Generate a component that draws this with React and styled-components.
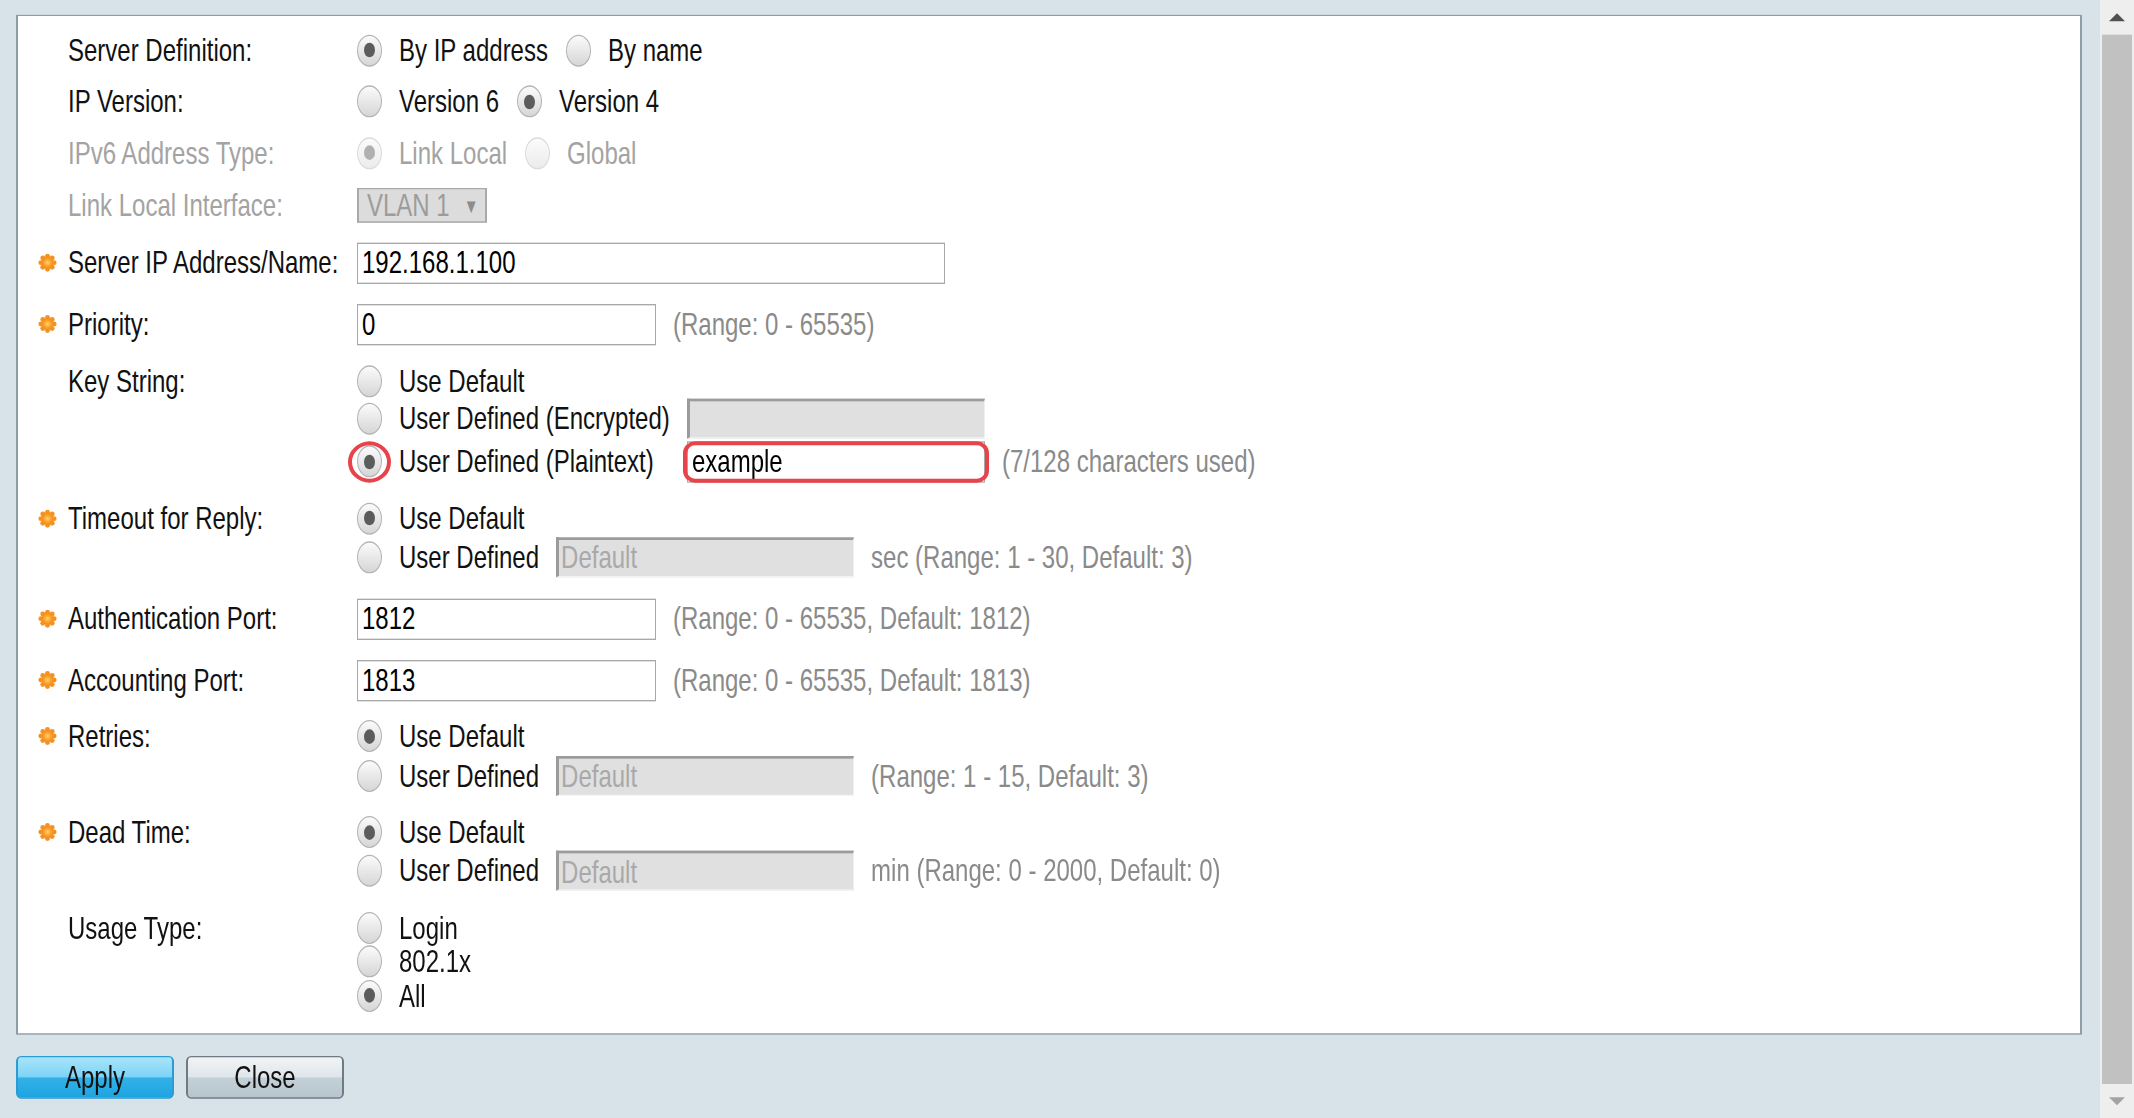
import styled, { createGlobalStyle, css } from "styled-components"

// The device UI is rendered at its natural size and stretched vertically
// like the captured page (text and radios look taller than wide there).
const GlobalStyle = createGlobalStyle`
  html, body {
    margin: 0;
    padding: 0;
    background: #d8e2e9;
  }
  * { box-sizing: border-box; }
  body, input, button {
    font-family: "Liberation Sans", Arial, sans-serif;
    font-size: 24px;
  }
`

const Page = styled.div`
  width: 100vw;
  height: 100vh;
  overflow: hidden;
`

const Viewport = styled.div`
  display: flex;
  width: 100%;
  height: 75%;
  transform: scaleY(1.33333);
  transform-origin: 0 0;
`

const Main = styled.div`
  flex: 1;
  display: flex;
  flex-direction: column;
  padding: 11px 18px 0 16px;
`

const Panel = styled.div`
  background: #fff;
  border: solid #8d9ea9;
  border-width: 1.5px 2px;
  padding: 13.5px 0 16.5px 20px;
  display: flex;
  flex-direction: column;
  gap: 14.6px;
`

const Row = styled.div`
  display: flex;
  align-items: flex-start;
`

const StarSlot = styled.div`
  width: 30px;
  height: ${p => p.$lh || 24}px;
  display: flex;
  align-items: center;
`

const Label = styled.div`
  width: 289px;
  line-height: ${p => p.$lh || 24}px;
  color: ${p => (p.$disabled ? "#a3a3a3" : "#111")};
  white-space: nowrap;
`

const Options = styled.div`
  display: flex;
  flex-direction: column;
  gap: 1.5px;
`

const Line = styled.div`
  display: flex;
  align-items: center;
  gap: 17px;
  min-height: ${p => p.$h || 24}px;
`

const Choice = styled.label`
  display: flex;
  align-items: center;
  gap: 17px;
  width: ${p => (p.$w ? `${p.$w}px` : "auto")};
  line-height: 24px;
  color: ${p => (p.$disabled ? "#a3a3a3" : "#111")};
  white-space: nowrap;
  & + & {
    margin-left: 1px;
  }
`

const Radio = styled.span`
  position: relative;
  flex: none;
  width: 25px;
  height: 24px;
  border-radius: 50%;
  border: 1px solid ${p => (p.$disabled ? "#dadada" : "#b4b4b4")};
  background: ${p =>
    p.$disabled
      ? "linear-gradient(#fbfbfb, #ececec)"
      : "linear-gradient(#fbfbfb, #d6d6d6)"};
  ${p =>
    p.$checked &&
    css`
      &::before {
        content: "";
        position: absolute;
        left: 50%;
        top: 50%;
        width: 11px;
        height: 11px;
        margin: -5.5px 0 0 -5.5px;
        border-radius: 50%;
        background: ${p.$disabled ? "#b0b0b0" : "#5c5c5c"};
      }
    `}
  ${p =>
    p.$ring &&
    css`
      &::after {
        content: "";
        position: absolute;
        inset: -4.5px -10px;
        border: solid #e8424a;
        border-width: 3px 4px;
        border-radius: 50%;
      }
    `}
`

const TextInput = styled.input`
  width: ${p => p.$w || 299}px;
  height: 31px;
  border: 1px solid #a8a8a8;
  padding: 0 4px;
  color: #000;
  background: #fff;
  outline: none;
`

const DisabledInput = styled.input`
  width: 298px;
  height: 30px;
  padding: 0 2px;
  background: #e0e0e0;
  border-style: solid;
  border-width: 2px 1px 1px 3px;
  border-color: #9b9b9b #f0f0f0 #f3f3f3 #9b9b9b;
  outline: none;
  &::placeholder {
    color: #a9a9a9;
  }
`

const Highlight = styled.div`
  position: relative;
  &::after {
    content: "";
    position: absolute;
    inset: 0 -4px;
    border: solid #e8424a;
    border-width: 3px 4px;
    border-radius: 12px / 9px;
    pointer-events: none;
  }
`

const Select = styled.div`
  width: 130px;
  height: 25.5px;
  display: flex;
  align-items: center;
  gap: 14px;
  padding-left: 8px;
  background: #dcdcdc;
  border: solid #a9a9a9;
  border-width: 1.5px 2px;
  color: #9c9c9c;
`

const Caret = styled.span`
  font-size: 15px;
  color: #8c8c8c;
`

const Hint = styled.span`
  color: #8a8a8a;
  white-space: nowrap;
`

const Footer = styled.div`
  display: flex;
  gap: 12px;
  margin-top: 16px;
`

const Button = styled.button`
  width: 158px;
  height: 31.5px;
  padding: 0;
  border-radius: 5px / 4px;
  color: #111;
  cursor: pointer;
  border-style: solid;
  border-width: 1.5px 2px;
  ${p =>
    p.$primary
      ? css`
          border-color: #2a9bd3;
          background: linear-gradient(#a8e4fb 0%, #7ed4f6 48%, #33b1e8 52%, #1ea4e0 100%);
        `
      : css`
          border-color: #6f7a83;
          background: linear-gradient(#f1f4f6 0%, #dfe6ea 48%, #c4d0d8 52%, #b7c5ce 100%);
        `}
`

const Scrollbar = styled.div`
  width: 34px;
  flex: none;
  display: flex;
  flex-direction: column;
  background: #eeeeee;
`

const ArrowBox = styled.div`
  height: 26px;
  display: flex;
  align-items: center;
  justify-content: center;
`

const Arrow = styled.span`
  width: 0;
  height: 0;
  border-left: 8px solid transparent;
  border-right: 8px solid transparent;
  ${p =>
    p.$down
      ? css`border-top: 6px solid #a3a3a3;`
      : css`border-bottom: 6px solid #505050;`}
`

const Thumb = styled.div`
  flex: 1;
  margin: 0 2px;
  background: #c1c1c1;
`

const Star = () => (
  <svg width="19" height="14" viewBox="0 0 20 20" preserveAspectRatio="none">
    <defs>
      <radialGradient id="sg" cx="50%" cy="50%" r="50%">
        <stop offset="0%" stopColor="#ffd36a" />
        <stop offset="60%" stopColor="#f9a12c" />
        <stop offset="100%" stopColor="#f28a1a" />
      </radialGradient>
    </defs>
    {[0, 45, 90, 135, 180, 225, 270, 315].map(a => (
      <circle
        key={a}
        cx={10 + 7 * Math.cos((a * Math.PI) / 180)}
        cy={10 + 7 * Math.sin((a * Math.PI) / 180)}
        r="2.6"
        fill="#f59222"
      />
    ))}
    <circle cx="10" cy="10" r="6.4" fill="url(#sg)" />
  </svg>
)

const Field = ({ label, required, lh, disabled, children }) => (
  <Row>
    <StarSlot $lh={lh}>{required && <Star />}</StarSlot>
    <Label $lh={lh} $disabled={disabled}>{label}</Label>
    <Options>{children}</Options>
  </Row>
)

const Opt = ({ checked, disabled, ring, w, children }) => (
  <Choice $disabled={disabled} $w={w}>
    <Radio $checked={checked} $disabled={disabled} $ring={ring} />
    {children}
  </Choice>
)

const DefaultOrUser = ({ hint }) => (
  <>
    <Line>
      <Opt checked>Use Default</Opt>
    </Line>
    <Line $h={31.5}>
      <Opt>User Defined</Opt>
      <DisabledInput disabled placeholder="Default" />
      <Hint>{hint}</Hint>
    </Line>
  </>
)

export default function App() {
  return (
    <Page>
      <GlobalStyle />
      <Viewport>
        <Main>
          <Panel>
            <Field label="Server Definition:">
              <Line>
                <Opt checked>By IP address</Opt>
                <Opt>By name</Opt>
              </Line>
            </Field>
            <Field label="IP Version:">
              <Line>
                <Opt>Version 6</Opt>
                <Opt checked>Version 4</Opt>
              </Line>
            </Field>
            <Field label="IPv6 Address Type:" disabled>
              <Line>
                <Opt checked disabled>Link Local</Opt>
                <Opt disabled>Global</Opt>
              </Line>
            </Field>
            <Field label="Link Local Interface:" disabled lh={25.5}>
              <Line $h={25.5}>
                <Select>
                  VLAN 1 <Caret>▼</Caret>
                </Select>
              </Line>
            </Field>
            <Field label="Server IP Address/Name:" required lh={31.5}>
              <Line $h={31.5}>
                <TextInput $w={588} defaultValue="192.168.1.100" />
              </Line>
            </Field>
            <Field label="Priority:" required lh={31.5}>
              <Line $h={31.5}>
                <TextInput defaultValue="0" />
                <Hint>(Range: 0 - 65535)</Hint>
              </Line>
            </Field>
            <Field label="Key String:">
              <Line>
                <Opt>Use Default</Opt>
              </Line>
              <Line $h={30}>
                <Opt w={313}>User Defined (Encrypted)</Opt>
                <DisabledInput disabled />
              </Line>
              <Line $h={31.5}>
                <Opt checked ring w={313}>User Defined (Plaintext)</Opt>
                <Highlight>
                  <TextInput $w={298} defaultValue="example" />
                </Highlight>
                <Hint>(7/128 characters used)</Hint>
              </Line>
            </Field>
            <Field label="Timeout for Reply:" required>
              <DefaultOrUser hint="sec (Range: 1 - 30, Default: 3)" />
            </Field>
            <Field label="Authentication Port:" required lh={31.5}>
              <Line $h={31.5}>
                <TextInput defaultValue="1812" />
                <Hint>(Range: 0 - 65535, Default: 1812)</Hint>
              </Line>
            </Field>
            <Field label="Accounting Port:" required lh={31.5}>
              <Line $h={31.5}>
                <TextInput defaultValue="1813" />
                <Hint>(Range: 0 - 65535, Default: 1813)</Hint>
              </Line>
            </Field>
            <Field label="Retries:" required>
              <DefaultOrUser hint="(Range: 1 - 15, Default: 3)" />
            </Field>
            <Field label="Dead Time:" required>
              <DefaultOrUser hint="min (Range: 0 - 2000, Default: 0)" />
            </Field>
            <Field label="Usage Type:">
              <Line>
                <Opt>Login</Opt>
              </Line>
              <Line>
                <Opt>802.1x</Opt>
              </Line>
              <Line>
                <Opt checked>All</Opt>
              </Line>
            </Field>
          </Panel>
          <Footer>
            <Button $primary>Apply</Button>
            <Button>Close</Button>
          </Footer>
        </Main>
        <Scrollbar>
          <ArrowBox>
            <Arrow />
          </ArrowBox>
          <Thumb />
          <ArrowBox>
            <Arrow $down />
          </ArrowBox>
        </Scrollbar>
      </Viewport>
    </Page>
  )
}
